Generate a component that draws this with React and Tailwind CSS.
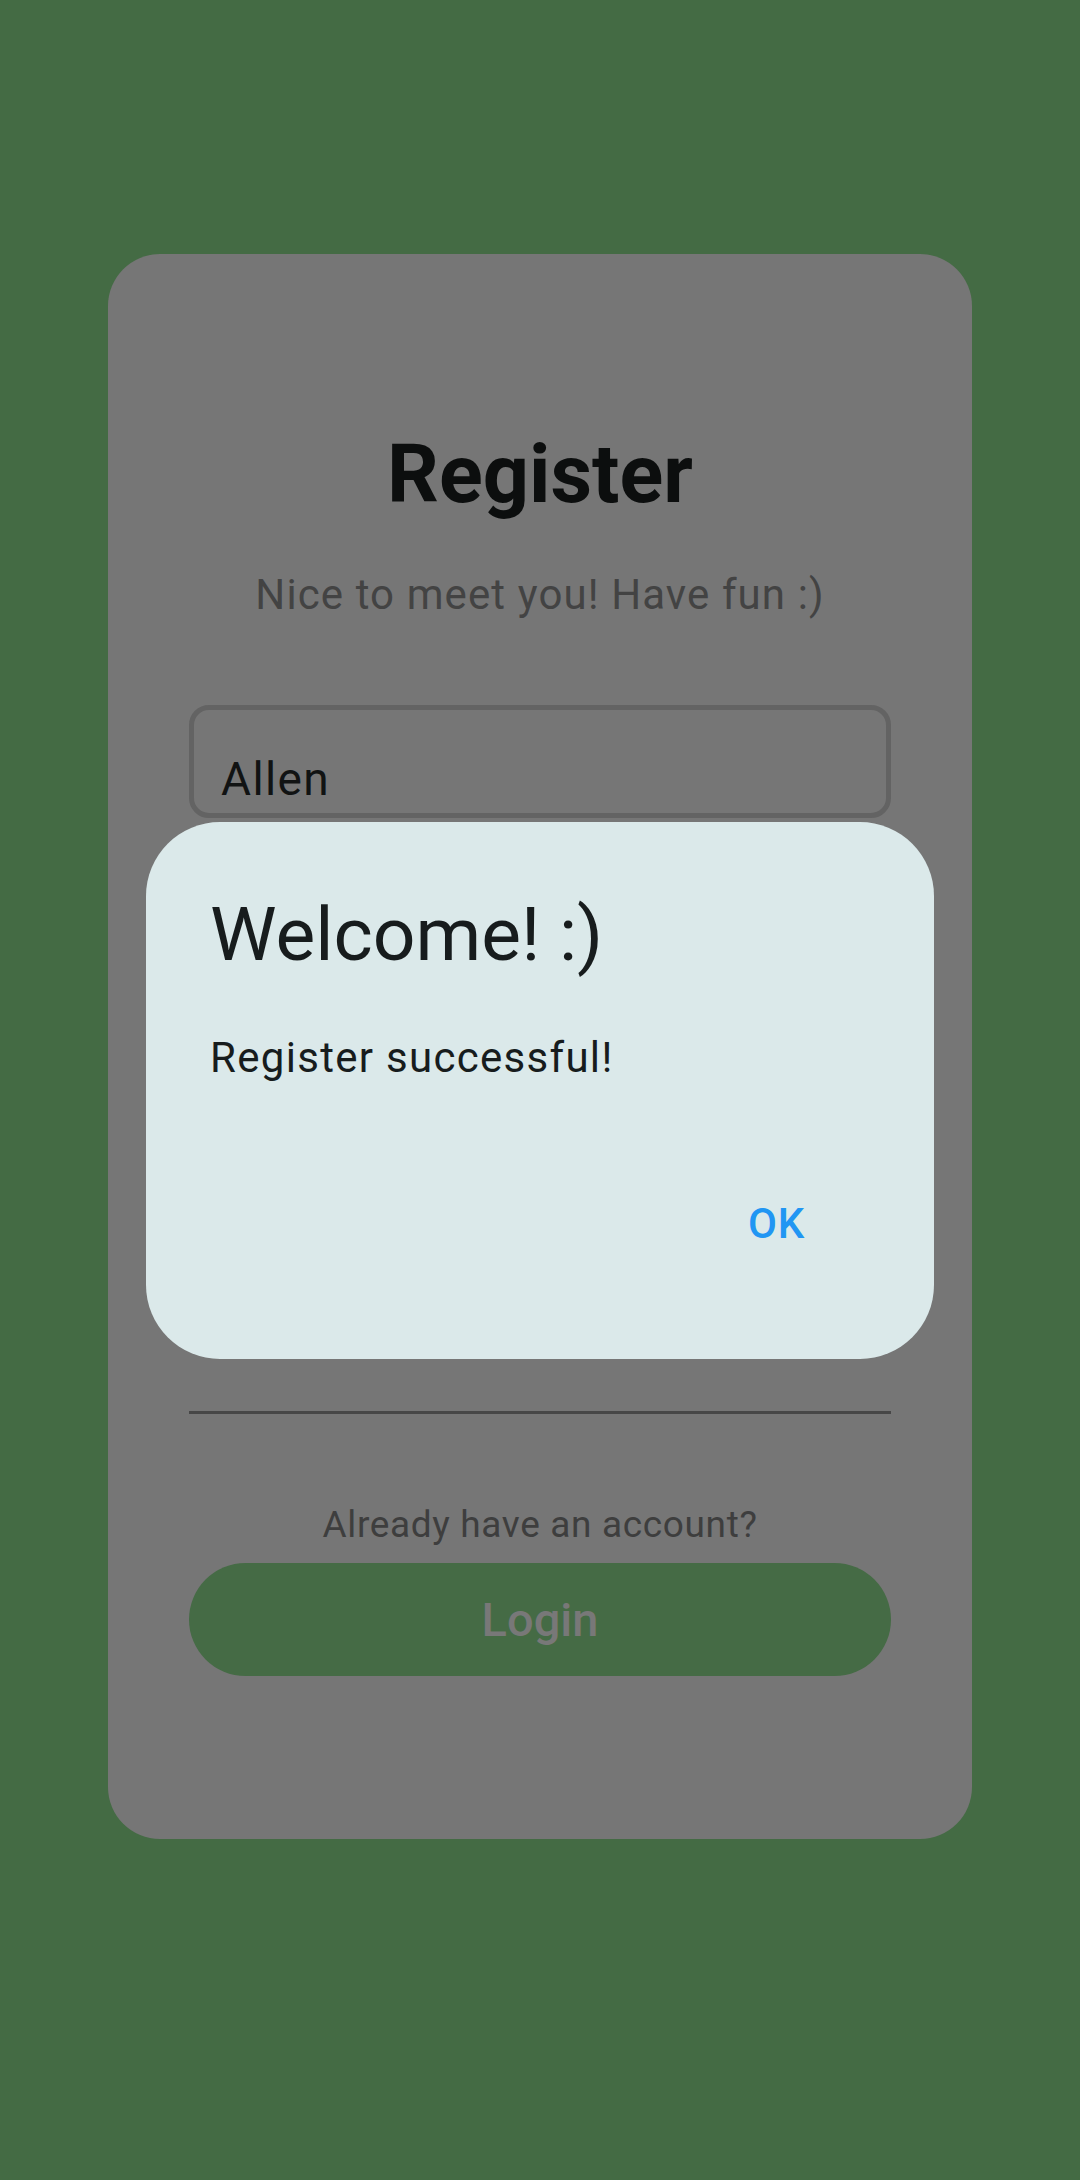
// App.jsx
const font = { fontFamily: "Roboto, 'Noto Sans', Arial, sans-serif" };

const RegisterCard = () => {
    return (
        <div className="mx-auto w-[864px] h-[1585px] rounded-[52px] bg-[#767676] pt-[180px] px-[81px] flex flex-col">
            {/* Header */}
            <h1 className="text-center text-[81px] leading-[82px] font-bold text-[#0c0e0e]">Register</h1>
            <p className="mt-[58px] text-center text-[42px] leading-[42px] tracking-[1.1px] text-[#434343]">
                Nice to meet you! Have fun :)
            </p>

            {/* Name field */}
            <div className="mt-[89px] h-[113px] rounded-[20px] border-[5px] border-[#636363] pt-[46px] pl-[27px]">
                <span className="block text-[46px] leading-[46px] tracking-[1.4px] text-[#111313]">Allen</span>
            </div>

            {/* Divider + login */}
            <div className="mt-[593px] h-[3px] bg-[#474747]"></div>
            <p className="mt-[92px] text-center text-[37px] leading-[37px] tracking-[0.65px] text-[#3e3e3e]">
                Already have an account?
            </p>
            <button className="mt-[20px] h-[113px] rounded-full bg-[#456b45] flex items-center justify-center">
                <span className="text-[47px] leading-[47px] font-medium text-[#787878]">Login</span>
            </button>
        </div>
    );
};

const WelcomeDialog = () => {
    return (
        <div className="absolute left-[146px] top-[822px] w-[788px] h-[537px] rounded-[74px] bg-[#dbe9ea] pt-[74px] pl-[64px] flex flex-col">
            <h2 className="text-[75px] leading-[76px] text-[#171c1d]">Welcome! :)</h2>
            <p className="mt-[65px] text-[42px] leading-[42px] tracking-[1.3px] text-[#171c1d]">Register successful!</p>
            <div className="mt-[124px] flex justify-end pr-[129px]">
                <span className="text-[42px] leading-[42px] font-medium tracking-[0.8px] text-[#2196f3]">OK</span>
            </div>
        </div>
    );
};

export default function App() {
    return (
        <div className="relative w-[1080px] h-[2180px] bg-[#446b44] pt-[254px]" style={font}>
            <RegisterCard />
            <WelcomeDialog />
        </div>
    );
}
